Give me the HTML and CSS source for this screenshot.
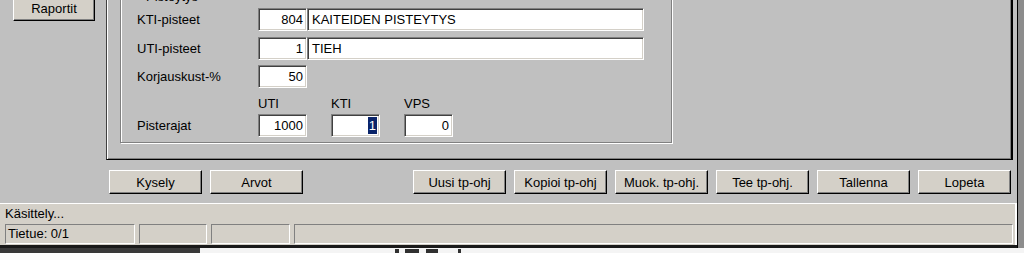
FILE: index.html
```html
<!DOCTYPE html>
<html lang="fi">
<head>
<meta charset="UTF-8">
<title>Pisteytys</title>
<link rel="stylesheet" href="styles.css">
</head>
<body>
<div class="screen">
<div class="window">
<div class="form">
<div class="side">
<button class="btn btn-side">Raportit</button>
</div>
<div class="main">
<div class="panel">
<fieldset class="group">
<legend>Pisteytys</legend>
<div class="row">
<span class="label">KTI-pisteet</span>
<span class="field num">804</span>
<span class="field text">KAITEIDEN PISTEYTYS</span>
</div>
<div class="row row-2">
<span class="label">UTI-pisteet</span>
<span class="field num">1</span>
<span class="field text">TIEH</span>
</div>
<div class="row row-2">
<span class="label">Korjauskust-%</span>
<span class="field num">50</span>
</div>
<div class="heads">
<span>UTI</span>
<span>KTI</span>
<span>VPS</span>
</div>
<div class="row row-limits">
<span class="label">Pisterajat</span>
<div class="limits">
<span class="field num">1000</span>
<span class="field num num-sel"><span class="sel">1</span></span>
<span class="field num">0</span>
</div>
</div>
</fieldset>
</div>
<div class="actions">
<button class="btn">Kysely</button>
<button class="btn">Arvot</button>
<button class="btn btn-push">Uusi tp-ohj</button>
<button class="btn">Kopioi tp-ohj</button>
<button class="btn">Muok. tp-ohj.</button>
<button class="btn">Tee tp-ohj.</button>
<button class="btn">Tallenna</button>
<button class="btn">Lopeta</button>
</div>
</div>
</div>
<div class="statusbar">
<div class="status-text">Käsittely...</div>
<div class="status-panels">
<div class="status-panel p1">Tietue: 0/1</div>
<div class="status-panel p2"></div>
<div class="status-panel p3"></div>
<div class="status-panel p4"></div>
</div>
</div>
<div class="bottom-line"></div>
</div>
<div class="frame-edge"></div>
</div>
<div class="desktop">
<div class="desk-left"></div>
<div class="desk-right">
<span class="mark m1"></span>
<span class="mark m2"></span>
<span class="mark m3"></span>
<span class="mark m4"></span>
</div>
</div>
</body>
</html>
```

FILE: styles.css
```css
body {
margin: 0;
height: 253px;
overflow: hidden;
background: #c0c0c0;
font-family: "Liberation Sans", Arial, sans-serif;
font-size: 13px;
color: #000;
}

.screen {
display: flex;
height: 260px;
margin-top: -12px;
}

.window {
width: 1017px;
display: flex;
flex-direction: column;
}

.form {
display: flex;
height: 215px;
}

.side {
width: 106px;
flex-shrink: 0;
}

.main {
flex: 1;
display: flex;
flex-direction: column;
padding-right: 4px;
}

/* classic raised button */
.btn {
width: 93px;
height: 24px;
padding: 0;
background: #d4d0c8;
border: 1px solid;
border-color: #fff #000 #000 #fff;
box-shadow: inset -1px -1px #808080;
font: inherit;
color: #000;
}

.btn-side {
width: 82px;
height: 25px;
margin: 8px 0 0 13px;
}

.panel {
height: 172px;
box-sizing: border-box;
border: 1px solid;
border-color: #404040 #000 #000 #404040;
border-right-width: 2px;
box-shadow: inset 1px 1px #fff, inset -1px -1px #808080;
padding-left: 13px;
}

.group {
width: 552px;
box-sizing: border-box;
margin: 0;
padding: 4px 0 5px 16px;
border: 1px solid #808080;
box-shadow: inset 1px 1px #fff, 1px 1px #fff;
}

.group legend {
padding: 0 2px;
margin-left: 7px;
line-height: 15px;
}

.row {
display: flex;
align-items: center;
height: 23px;
}

.row-2 {
margin-top: 6px;
}

.row-2 + .row-2 {
margin-top: 5px;
}

.row-limits {
margin-top: 2px;
}

.label {
width: 121px;
flex-shrink: 0;
}

/* sunken edit box */
.field {
display: block;
height: 23px;
box-sizing: border-box;
background: #fff;
border: 1px solid;
border-color: #808080 #fff #fff #808080;
box-shadow: inset 1px 1px #404040, inset -1px -1px #d4d0c8;
padding: 0 3px 0 4px;
line-height: 21px;
white-space: nowrap;
}

.num {
width: 49px;
text-align: right;
}

.text {
width: 337px;
}

.heads {
display: flex;
gap: 24px;
margin: 8px 0 0 121px;
height: 16px;
line-height: 16px;
}

.heads span {
width: 49px;
}

.limits {
display: flex;
gap: 24px;
}

.num-sel {
padding-right: 2px;
}

.sel {
display: inline-block;
background: #0a246a;
color: #fff;
line-height: 17px;
padding: 0 1px;
}

.actions {
display: flex;
gap: 8px;
margin-top: 10px;
padding: 0 2px 0 3px;
}

.btn-push {
margin-left: auto;
}

.statusbar {
height: 42px;
box-sizing: border-box;
background: #d4d0c8;
border-top: 1px solid #fff;
border-right: 2px solid #fff;
}

.status-text {
height: 20px;
line-height: 20px;
padding-left: 5px;
}

.status-panels {
display: flex;
gap: 4px;
padding: 0 2px 0 5px;
}

.status-panel {
height: 20px;
box-sizing: border-box;
border: 1px solid;
border-color: #808080 #fff #fff #808080;
padding-left: 2px;
line-height: 18px;
}

.p1 { width: 130px; }
.p2 { width: 68px; }
.p3 { width: 79px; }
.p4 { flex: 1; }

.bottom-line {
height: 3px;
background: #1a1a1a;
}

.frame-edge {
width: 7px;
background: #8c8c8c;
box-shadow: inset 1px 0 #000;
}

.desktop {
display: flex;
height: 6px;
}

.desk-left {
width: 200px;
background: #3a3a3a;
}

.desk-right {
flex: 1;
background: #f4f4f4;
position: relative;
}

.mark {
position: absolute;
top: 1px;
height: 5px;
background: #303030;
}

.m1 { left: 195px; width: 4px; }
.m2 { left: 205px; width: 14px; }
.m3 { left: 226px; width: 12px; }
.m4 { left: 258px; width: 3px; }
```
